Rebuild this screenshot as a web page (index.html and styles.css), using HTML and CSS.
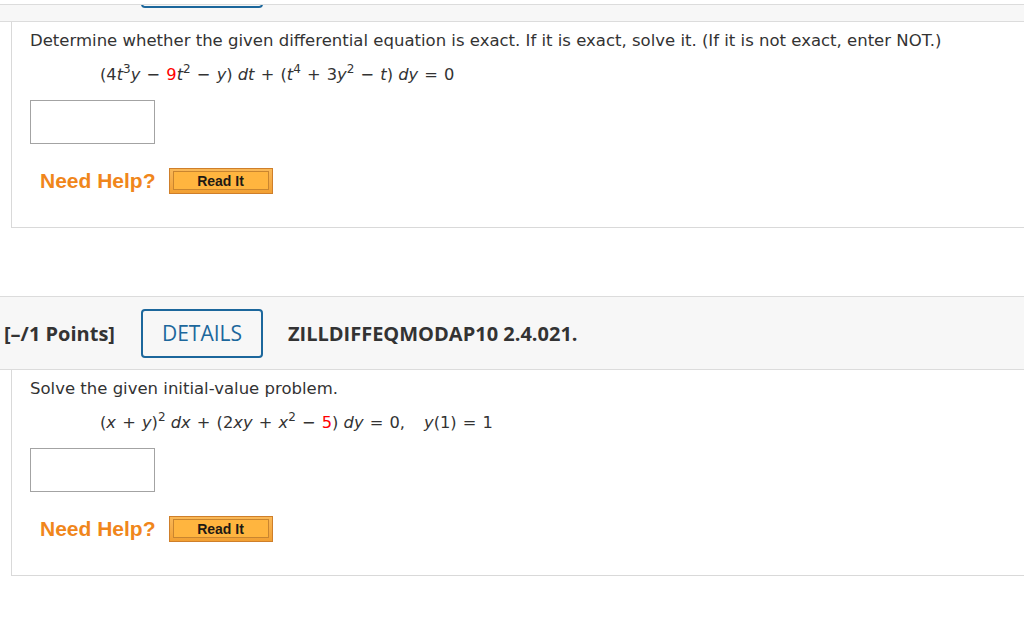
FILE: index.html
```html
<!DOCTYPE html>
<html>
<head>
<meta charset="utf-8">
<link rel="stylesheet" href="styles.css">
</head>
<body>
<div class="topgap"></div>
<div class="qhead qhead-cut">
  <span class="details details-cut"></span>
</div>
<div class="qbody">
  <p class="prompt">Determine whether the given differential equation is exact. If it is exact, solve it. (If it is not exact, enter NOT.)</p>
  <p class="eq">(4<i>t</i><sup>3</sup><i>y</i> <span class="op">−</span> <span class="red">9</span><i>t</i><sup>2</sup> <span class="op">−</span> <i>y</i>) <i>dt</i> <span class="op">+</span> (<i>t</i><sup>4</sup> <span class="op">+</span> 3<i>y</i><sup>2</sup> <span class="op">−</span> <i>t</i>) <i>dy</i> <span class="op">=</span> 0</p>
  <div class="answer"></div>
  <div class="help">
    <span class="needhelp">Need Help?</span>
    <span class="readit"><span class="readit-inner">Read It</span></span>
  </div>
</div>

<div class="qhead">
  <span class="points">[–/1 Points]</span>
  <span class="details">DETAILS</span>
  <span class="qtitle">ZILLDIFFEQMODAP10 2.4.021.</span>
</div>
<div class="qbody">
  <p class="prompt">Solve the given initial-value problem.</p>
  <p class="eq">(<i>x</i> <span class="op">+</span> <i>y</i>)<sup>2</sup> <i>dx</i> <span class="op">+</span> (2<i>xy</i> <span class="op">+</span> <i>x</i><sup>2</sup> <span class="op">−</span> <span class="red">5</span>) <i>dy</i> <span class="op">=</span> 0,<span class="wide"></span><i>y</i>(1) <span class="op">=</span> 1</p>
  <div class="answer"></div>
  <div class="help">
    <span class="needhelp">Need Help?</span>
    <span class="readit"><span class="readit-inner">Read It</span></span>
  </div>
</div>
</body>
</html>
```

FILE: styles.css
```css
html, body {
  margin: 0;
  padding: 0;
  background: #ffffff;
}
body {
  width: 1024px;
  height: 624px;
  overflow: hidden;
  font-family: "DejaVu Sans", Verdana, sans-serif;
  color: #333333;
}
.topgap {
  height: 4px;
}
.qhead {
  display: flex;
  align-items: center;
  height: 72px;
  background: #f7f7f7;
  border-top: 1px solid #dcdcdc;
  border-bottom: 1px solid #dcdcdc;
  font-family: "Open Sans", sans-serif;
}
.qhead-cut {
  height: 16px;
  align-items: flex-end;
  overflow: hidden;
}
.points {
  margin-left: 4px;
  font-weight: 700;
  font-size: 20px;
  color: #333333;
}
.details {
  box-sizing: border-box;
  width: 122px;
  height: 49px;
  border: 2px solid #1c679c;
  border-radius: 4px;
  display: flex;
  align-items: center;
  justify-content: center;
  font-size: 21px;
  color: #1c679c;
  margin-left: 26px;
}
.qhead-cut .details-cut {
  margin-left: 141px;
  margin-bottom: 13px;
  flex-shrink: 0;
}
.qtitle {
  margin-left: 25px;
  font-weight: 700;
  font-size: 20px;
  color: #333333;
}
.qbody {
  margin-left: 11px;
  border-left: 1px solid #d9d9d9;
  border-bottom: 1px solid #d9d9d9;
  padding: 9px 0 33px 18px;
  margin-bottom: 68px;
}
.prompt {
  margin: 0;
  font-size: 16.5px;
  line-height: 20px;
}
.eq {
  margin: 14px 0 0 70px;
  font-size: 16.25px;
  line-height: 20px;
}
.eq i {
  font-style: italic;
}
.eq sup {
  font-size: 12px;
  line-height: 0;
  vertical-align: 7px;
}
.op {
  padding: 0 1px;
}
.red {
  color: #ff0000;
}
.wide {
  display: inline-block;
  width: 19px;
}
.answer {
  box-sizing: border-box;
  width: 125px;
  height: 44px;
  border: 1px solid #a3a3a3;
  margin-top: 15px;
}
.help {
  display: flex;
  align-items: center;
  margin-top: 24px;
  margin-left: 10px;
}
.needhelp {
  font-family: "Liberation Sans", Arial, sans-serif;
  font-weight: 700;
  font-size: 21px;
  color: #f0861b;
}
.readit {
  box-sizing: border-box;
  width: 104px;
  height: 26px;
  margin-left: 13px;
  border: 1px solid #cf7f2a;
  background: linear-gradient(#f9b858, #f2a033);
  padding: 2px 3px 3px 3px;
  display: flex;
}
.readit-inner {
  flex: 1;
  border: 1px solid #c9852f;
  background: #ffb53f;
  display: flex;
  align-items: center;
  justify-content: center;
  font-family: "Liberation Sans", Arial, sans-serif;
  font-weight: 700;
  font-size: 14px;
  color: #1e1a14;
}
```
